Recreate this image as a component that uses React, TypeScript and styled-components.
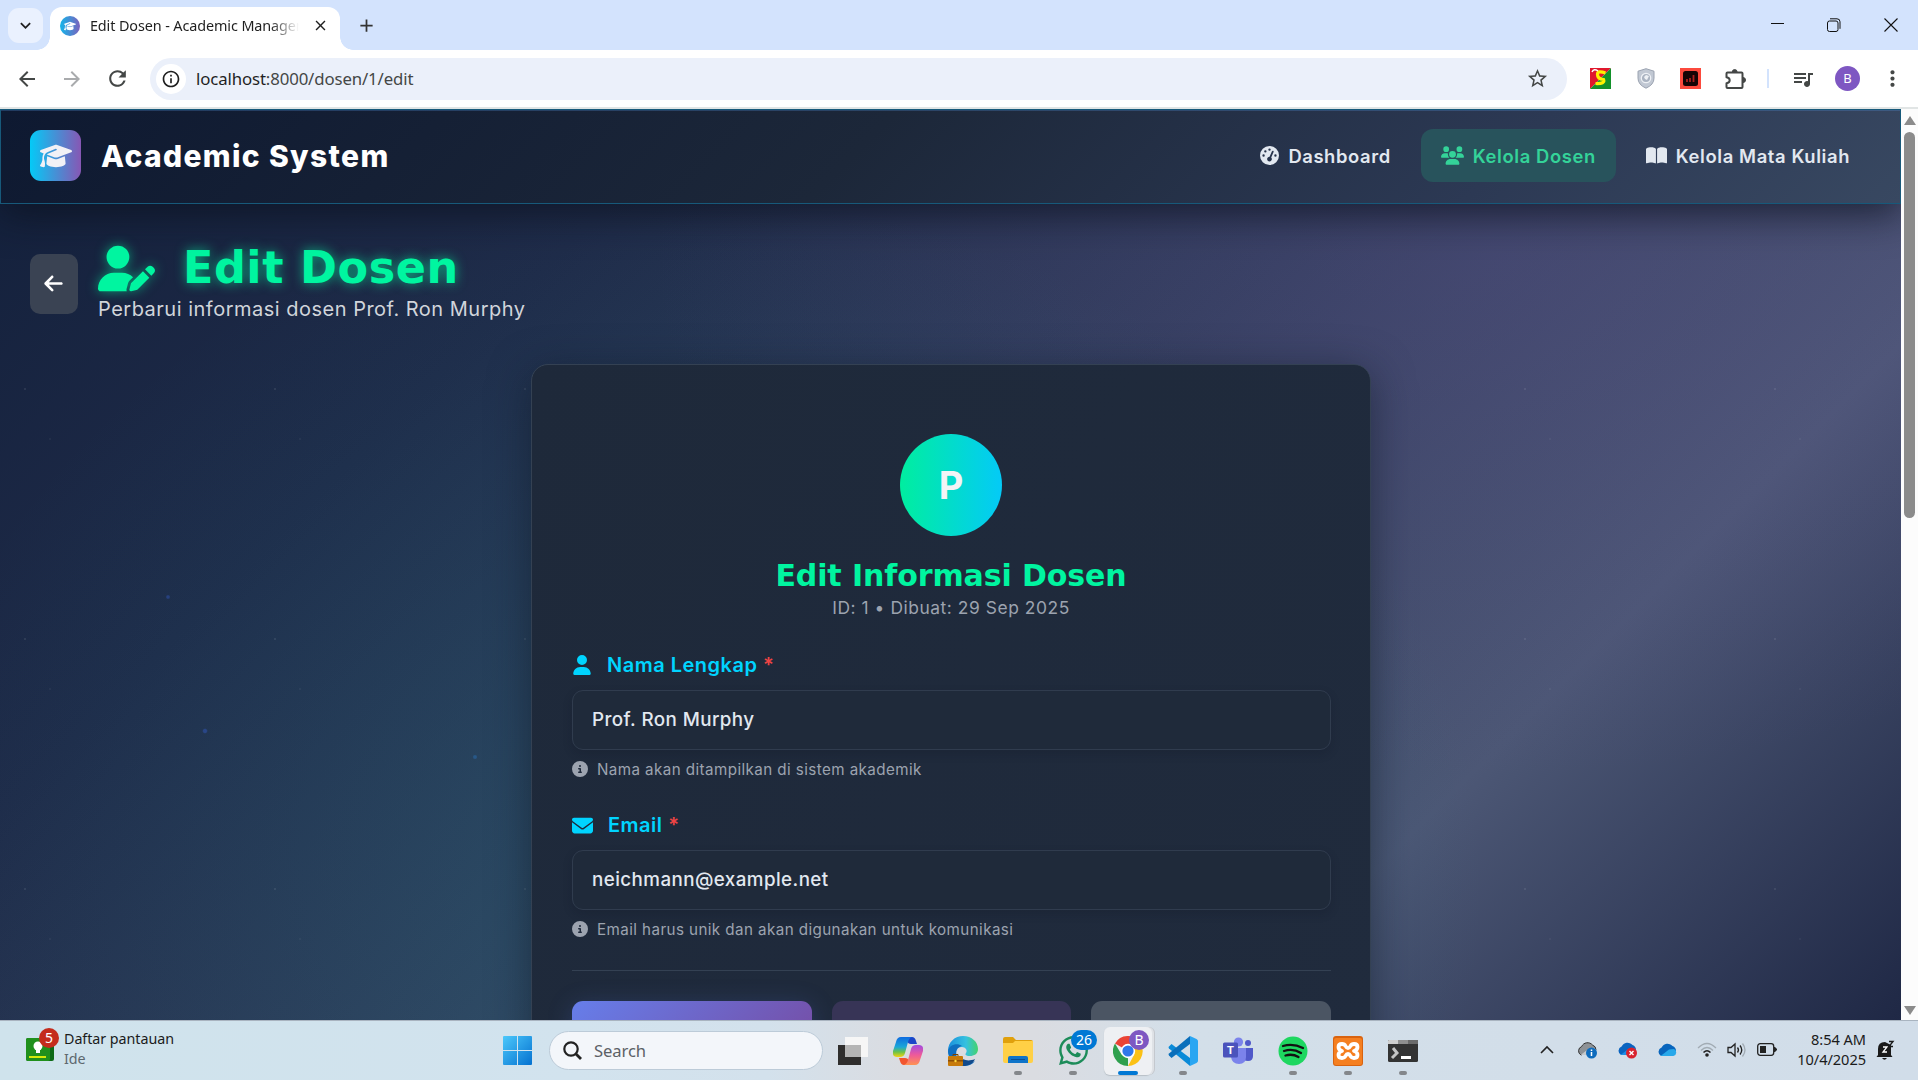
import React from "react";
import styled, { createGlobalStyle } from "styled-components";
import {
  FaGraduationCap, FaGaugeHigh, FaUsers, FaBookOpen, FaArrowLeft, FaUserPen,
  FaUser, FaEnvelope, FaCircleInfo, FaWhatsapp,
} from "react-icons/fa6";
import {
  MdArrowBack, MdArrowForward, MdRefresh, MdStarBorder,
  MdQueueMusic, MdMoreVert, MdClose, MdAdd, MdKeyboardArrowDown, MdInfoOutline,
} from "react-icons/md";

const ui = `"Noto Sans", "Open Sans", sans-serif`;
const display = `"DejaVu Sans", Inter, sans-serif`;

const Global = createGlobalStyle`
  * { box-sizing: border-box; }
  html, body { margin: 0; padding: 0; overflow: hidden; }
  svg { display: block; flex: none; }
`;

const Desktop = styled.div`
  width: 1918px;
  height: 1080px;
  display: flex;
  flex-direction: column;
  overflow: hidden;
  font-family: Inter, sans-serif;
`;

/* ---------- Browser window ---------- */

const TabStrip = styled.div`
  height: 50px;
  flex: none;
  background: #d3e3fd;
  display: flex;
  align-items: flex-start;
  padding: 7px 0 0 8px;
`;
const TabSearch = styled.div`
  width: 35px;
  height: 35px;
  margin-top: 1px;
  border-radius: 11px;
  background: #eaf1fe;
  display: grid;
  place-items: center;
  color: #1f1f1f;
`;
const Tab = styled.div`
  position: relative;
  width: 290px;
  height: 43px;
  margin-left: 7px;
  padding: 0 11px 6px 10px;
  border-radius: 12px 12px 0 0;
  background: #fff;
  display: flex;
  align-items: center;
  &::before, &::after {
    content: "";
    position: absolute;
    bottom: 0;
    width: 13px;
    height: 13px;
  }
  &::before { left: -13px; background: radial-gradient(circle at 0 0, transparent 12.5px, #fff 13px); }
  &::after { right: -13px; background: radial-gradient(circle at 100% 0, transparent 12.5px, #fff 13px); }
`;
const Favicon = styled.div`
  width: 20px;
  height: 20px;
  border-radius: 50%;
  background: linear-gradient(90deg, #13b5ea, #7b62bd);
  color: #fff;
  display: grid;
  place-items: center;
`;
const TabTitle = styled.div`
  width: 210px;
  margin: 0 13px 0 10px;
  overflow: hidden;
  white-space: nowrap;
  font: 14.4px/20px ${ui};
  letter-spacing: -0.1px;
  color: #1f1f1f;
  mask-image: linear-gradient(90deg, #000 86%, transparent 100%);
`;
const NewTab = styled.div`
  margin: 8px 0 0 16px;
  color: #333;
`;
const WindowButtons = styled.div`
  margin-left: auto;
  width: 172px;
  height: 35px;
  display: flex;
  align-items: center;
  justify-content: space-between;
  padding: 0 20px 0 25px;
`;
const Toolbar = styled.div`
  height: 59px;
  flex: none;
  display: flex;
  align-items: center;
  padding: 0 14px 0 15px;
  background: #fff;
  border-bottom: 2px solid #e1e5e5;
`;
const ToolIcon = styled.div<{ $w?: number; $dim?: boolean }>`
  width: ${(p) => p.$w ?? 45}px;
  flex: none;
  display: grid;
  place-items: center;
  color: ${(p) => (p.$dim ? "#a9abad" : "#444746")};
`;
const Menu = styled(ToolIcon)`
  margin-left: 10px;
`;
const NavIcons = styled.div`
  width: 135px;
  display: flex;
  & > * { justify-items: start; }
`;
const Address = styled.div`
  flex: 1;
  height: 42px;
  border-radius: 21px;
  background: #ebf0fa;
  display: flex;
  align-items: center;
  padding: 0 18px 0 6px;
`;
const SiteInfo = styled.div`
  width: 30px;
  height: 30px;
  border-radius: 50%;
  background: #fff;
  display: grid;
  place-items: center;
  color: #1f1f1f;
`;
const Url = styled.div`
  flex: 1;
  margin-left: 10px;
  font: 16.8px/24px ${ui};
  letter-spacing: -0.12px;
  color: #444746;
  b { font-weight: 400; color: #1f1f1f; }
`;
const Extensions = styled.div`
  display: flex;
  align-items: center;
  margin-left: 11px;
`;
const Divider = styled.div`
  width: 2px;
  height: 19px;
  margin: 0 11px 0 9px;
  background: #d3e3fd;
`;
const Profile = styled.div`
  width: 25px;
  height: 25px;
  border-radius: 50%;
  background: #7e57c2;
  color: #fff;
  font: 13px/25px ${ui};
  text-align: center;
`;
const Viewport = styled.div`
  flex: 1;
  min-height: 0;
  display: flex;
`;
const Scrollbar = styled.div`
  width: 17px;
  background: #fcfcfc;
  display: flex;
  flex-direction: column;
  align-items: center;
  padding: 7px 0 5px;
`;
const Thumb = styled.div`
  width: 11px;
  height: 386px;
  margin: 7px 0 auto;
  border-radius: 6px;
  background: #8b8b8b;
`;
const Arrow = styled.div<{ $down?: boolean }>`
  border: 6px solid transparent;
  border-top-width: ${(p) => (p.$down ? 9 : 0)}px;
  border-bottom-width: ${(p) => (p.$down ? 0 : 9)}px;
  border-${(p) => (p.$down ? "top" : "bottom")}-color: #8b8b8b;
`;

/* ---------- Site ---------- */

const Page = styled.div`
  width: 1901px;
  height: 911px;
  overflow: hidden;
  display: flex;
  flex-direction: column;
  background:
    radial-gradient(circle at 25px 30px, rgba(255, 255, 255, 0.08) 0.8px, transparent 1.6px) 0 0 / 250px 250px,
    radial-gradient(circle at 50px 80px, rgba(255, 255, 255, 0.04) 0.8px, transparent 1.6px) 0 0 / 250px 250px,
    radial-gradient(circle at 168px 488px, rgba(50, 90, 200, 0.4) 1.2px, transparent 2.4px),
    radial-gradient(circle at 205px 622px, rgba(50, 90, 200, 0.45) 1.5px, transparent 2.8px),
    radial-gradient(circle at 475px 648px, rgba(40, 120, 200, 0.4) 1.3px, transparent 2.5px),
    radial-gradient(ellipse 850px 520px at 1500px 150px, rgba(105, 75, 160, 0.2), transparent),
    radial-gradient(ellipse 800px 700px at 690px 780px, rgba(20, 140, 150, 0.2), transparent),
    linear-gradient(135deg, #13203b 0%, #1f2b49 25%, #323f5c 50%, #4c5775 76%, #1f2845 100%);
`;
const Header = styled.header`
  position: relative;
  height: 95px;
  flex: none;
  display: flex;
  align-items: center;
  padding: 0 30px 2px 29px;
  border: 1px solid #17597a;
  background: linear-gradient(135deg, #0e1931 0%, #1c2739 45%, #2c3954 78%, #384861 100%);
  box-shadow: inset 0 1px 0 rgba(80, 140, 210, 0.3), 0 10px 38px rgba(10, 16, 28, 0.7);
`;
const Logo = styled.div`
  width: 51px;
  height: 51px;
  border-radius: 11px;
  background: linear-gradient(90deg, #04caf7, #8757b4);
  color: #f1f1f6;
  display: grid;
  place-items: center;
`;
const Brand = styled.div`
  margin-left: 20px;
  font: 800 30px/40px Inter, sans-serif;
  letter-spacing: 1.35px;
  color: #fff;
  white-space: nowrap;
`;
const Nav = styled.nav`
  margin-left: auto;
  display: flex;
  gap: 10px;
`;
const NavLink = styled.div<{ $active?: boolean }>`
  height: 53px;
  padding: 0 20px;
  border-radius: 12px;
  display: flex;
  align-items: center;
  gap: 9px;
  font: 600 18.4px/24px Inter, sans-serif;
  letter-spacing: 0.6px;
  color: ${(p) => (p.$active ? "#34d399" : "#e2e8f0")};
  background: ${(p) => (p.$active ? "#28535c" : "transparent")};
  white-space: nowrap;
`;
const PageHead = styled.div`
  display: flex;
  align-items: center;
  height: 80px;
  margin: 36px 0 0 30px;
  gap: 20px;
`;
const Back = styled.div`
  width: 48px;
  height: 60px;
  margin-top: 8px;
  padding: 0 1px 1px 0;
  border-radius: 10px;
  background: #3a4353;
  color: #fff;
  display: grid;
  place-items: center;
`;
const Heading = styled.div`
  display: flex;
  flex-direction: column;
  margin-top: 4px;
`;
const Title = styled.h1`
  margin: 0;
  height: 54px;
  display: flex;
  align-items: center;
  gap: 28px;
  font: 700 44.5px/54px ${display};
  letter-spacing: 0.55px;
  color: #00f5a0;
  text-shadow: 0 0 12px rgba(0, 245, 160, 0.65);
  svg { filter: drop-shadow(0 0 6px rgba(0, 245, 160, 0.55)); }
`;
const Subtitle = styled.div`
  font-size: 20px;
  line-height: 28px;
  letter-spacing: 0.5px;
  color: #d1d5db;
`;
const Card = styled.section`
  width: 840px;
  height: 700px;
  flex: none;
  margin: 44px 0 0 531px;
  padding: 69px 39px 0 40px;
  border: 1px solid #344153;
  border-radius: 17px;
  background: linear-gradient(120deg, #1e293a, #202b3d);
  box-shadow: 0 8px 40px rgba(15, 23, 38, 0.55);
`;
const Profiled = styled.div`
  display: flex;
  flex-direction: column;
  align-items: center;
  margin: 0 1px 28px 0;
`;
const Avatar = styled.div`
  width: 102px;
  height: 102px;
  border-radius: 50%;
  background: linear-gradient(90deg, #00ee9f, #04caf7);
  color: #f3f4f6;
  font: 700 38px/102px Inter, sans-serif;
  text-align: center;
`;
const CardTitle = styled.h2`
  margin: 20px 0 -1px;
  font: 700 30px/40px ${display};
  letter-spacing: -0.1px;
  color: #00f5a0;
  white-space: nowrap;
`;
const CardMeta = styled.div`
  font-size: 17.4px;
  line-height: 26px;
  letter-spacing: 0.55px;
  color: #9ca3af;
`;
const Field = styled.div`
  height: 160px;
`;
const Label = styled.div`
  height: 32px;
  display: flex;
  align-items: center;
  gap: 15px;
  color: #00d4ff;
  font: 600 20px/32px Inter, sans-serif;
  letter-spacing: 0.5px;
  em { font-style: normal; color: #ef4444; }
`;
const Input = styled.div`
  height: 60px;
  margin-top: 9px;
  padding: 0 19px;
  border: 1px solid #303c4e;
  border-radius: 11px;
  background: #1f2a3a;
  box-shadow: 0 4px 10px rgba(15, 20, 35, 0.2);
  font: 500 18.8px/57px Inter, sans-serif;
  letter-spacing: 0.42px;
  color: #e2e8f0;
`;
const Hint = styled.div`
  height: 20px;
  margin-top: 9px;
  display: flex;
  align-items: center;
  gap: 9px;
  font-size: 15.2px;
  letter-spacing: 0.41px;
  color: #9ca3af;
`;
const Actions = styled.div`
  margin-top: 1px;
  padding-top: 30px;
  border-top: 1px solid #344153;
  display: grid;
  grid-template-columns: repeat(3, 1fr);
  gap: 20px;
`;
const Action = styled.div<{ $bg: string; $glow?: boolean }>`
  height: 60px;
  border-radius: 11px;
  background: ${(p) => p.$bg};
  box-shadow: ${(p) => (p.$glow ? "0 4px 25px rgba(85, 110, 210, 0.25)" : "none")};
`;

/* ---------- Taskbar ---------- */

const Taskbar = styled.div`
  height: 60px;
  flex: none;
  display: flex;
  align-items: center;
  border-top: 1px solid #a9b4c0;
  background: linear-gradient(90deg, #cfe3ec 0%, #d2e3ee 30%, #d3e1ec 40%, #dadce1 47%, #dadce1 54%, #d3dfe9 62%, #d1dde9 100%);
  font-family: ${ui};
  color: #1b1b1b;
`;
const Widget = styled.div`
  width: 503px;
  padding-left: 26px;
  display: flex;
  align-items: center;
  gap: 10px;
  font-size: 14.3px;
  line-height: 20px;
  letter-spacing: -0.05px;
  span { display: block; color: #5d686e; }
`;
const WidgetText = styled.div`
  margin-top: -4px;
`;
const WidgetIcon = styled.div`
  position: relative;
  width: 28px;
  height: 24px;
  margin-top: -2px;
`;
const Badge = styled.div<{ $bg: string; $x: number; $y: number; $w?: number }>`
  position: absolute;
  left: ${(p) => p.$x}px;
  top: ${(p) => p.$y}px;
  width: ${(p) => p.$w ?? 20}px;
  height: 20px;
  border-radius: 10px;
  background: ${(p) => p.$bg};
  color: #fff;
  font: 14px/20px ${ui};
  text-align: center;
`;
const SearchBox = styled.div`
  width: 274px;
  height: 39px;
  margin: 0 10px 0 17px;
  border-radius: 20px;
  background: #f3f6fa;
  border: 1px solid #bccbd8;
  display: flex;
  align-items: center;
  gap: 12px;
  padding-left: 13px;
  font-size: 16.6px;
  letter-spacing: -0.1px;
  color: #5c6166;
`;
const Apps = styled.div`
  display: flex;
  gap: 7px;
  margin-left: -4px;
`;
const AppButton = styled.div<{ $active?: boolean }>`
  position: relative;
  width: 48px;
  height: 48px;
  border-radius: 6px;
  display: grid;
  place-items: center;
  background: ${(p) => (p.$active ? "#eef0f3" : "transparent")};
  box-shadow: ${(p) => (p.$active ? "2px 0 0 #dfe2e6, 3px 0 0 #c4c8ce, 0 1px 1px #b8bfc6" : "none")};
`;
const Running = styled.div<{ $active?: boolean }>`
  position: absolute;
  bottom: 0;
  left: 50%;
  transform: translateX(-50%);
  width: ${(p) => (p.$active ? 20 : 8)}px;
  height: 4px;
  border-radius: 2px;
  background: ${(p) => (p.$active ? "#0078d4" : "#84878b")};
`;
const Tray = styled.div`
  margin: -2px 0 0 auto;
  display: flex;
  align-items: center;
  padding-right: 22px;
`;
const TrayItem = styled.div<{ $w: number }>`
  width: ${(p) => p.$w}px;
  display: grid;
  place-items: center;
`;
const Clock = styled.div`
  width: 79px;
  margin: -2px 10px 0 0;
  text-align: right;
  font-size: 14.6px;
  line-height: 20px;
  letter-spacing: -0.05px;
  white-space: nowrap;
`;

const Cloud = ({ tone }: { tone: "blue" | "sky" | "gray" }) => {
  const [a, b] = { blue: ["#0a64c0", "#1e8fe8"], sky: ["#0865bd", "#28a8ea"], gray: ["#8e9296", "#c7c9cb"] }[tone];
  return (
    <>
      <path d="M5 14a4.6 4.6 0 0 1 .6-8.4A6.5 6.5 0 0 1 16.5 4 5.3 5.3 0 0 1 20 9z" fill={a} stroke={tone === "gray" ? "#333" : "none"} />
      <path d="M4.6 14 13 7.4l5-.4a3.7 3.7 0 0 1-.6 7z" fill={b} />
    </>
  );
};

const EdgeIcon = () => (
  <svg width="30" height="30" viewBox="0 0 30 30">
    <defs>
      <linearGradient id="eg" x2="1"><stop stopColor="#1a8fdc" /><stop offset=".6" stopColor="#35c1e0" /><stop offset="1" stopColor="#45d36c" /></linearGradient>
    </defs>
    <path d="M0 15C0 6 7 0 15 0c9 0 15 6 15 13 0 5-4 7-8 7-5 0-5-2-4-3 2-3-1-6-4-6-6 0-9 5-8 10C3 21 0 19 0 15z" fill="url(#eg)" />
    <path d="M0 15c1-6 9-9 14-5-5 1-7 6-5 11 2 6 9 8 16 5l2-1c-3 4-7 5-12 5C7 30 0 24 0 15z" fill="#0f6fc0" />
    <path d="M12 20c2 4 8 6 15 3-2 5-7 7-12 7-3-2-4-6-3-10z" fill="#114a8b" />
    <rect y="20" width="15" height="10" rx="1" fill="#c77a0a" />
    <path d="M5 20v-1.5h5V20" fill="none" stroke="#7a4300" />
    <path d="M0 24h15v1.5H0z" fill="#8e4f03" /><circle cx="7.5" cy="25" r="1.2" fill="#ffd83a" />
  </svg>
);
const CopilotIcon = () => (
  <svg width="30" height="28" viewBox="0 0 30 28">
    <defs>
      <linearGradient id="c1" x2="0" y2="1"><stop stopColor="#0e6be0" /><stop offset=".5" stopColor="#1ba7d8" /><stop offset=".75" stopColor="#6cc24a" /><stop offset="1" stopColor="#f5d311" /></linearGradient>
      <linearGradient id="c2" x2="0" y2="1"><stop stopColor="#a24be0" /><stop offset=".5" stopColor="#ee5a9a" /><stop offset="1" stopColor="#ff9351" /></linearGradient>
    </defs>
    <path d="M14 0h5q3 0 4 4l1 3h-6q-3 0-4-3z" fill="#1b46c8" />
    <path d="M16 28h-5q-3 0-4-4l-1-3h6q3 0 4 3z" fill="#f2552f" />
    <path d="M8 0h11q-3 1-4 5l-3 11q-1 4-5 4H4q-5 0-4-6L3 5q1-5 5-5z" fill="url(#c1)" />
    <path d="M22 28H11q3-1 4-5l3-11q1-4 5-4h3q5 0 4 6l-3 9q-1 5-5 5z" fill="url(#c2)" />
  </svg>
);
const ChromeIcon = () => (
  <svg width="30" height="30" viewBox="0 0 30 30">
    <path d="M15 15 2 7.5A15 15 0 0 1 28 7.5z" fill="#ea4335" />
    <path d="M15 15 15 30A15 15 0 0 1 2 7.5l6.5 11z" fill="#2fa04e" />
    <path d="M15 8h13A15 15 0 0 1 15 30l6-11z" fill="#fbc116" />
    <circle cx="15" cy="15" r="7.2" fill="#fff" /><circle cx="15" cy="15" r="5.6" fill="#2f78ea" />
  </svg>
);

const apps: { name: string; icon: React.ReactNode; running?: boolean; active?: boolean }[] = [
  { name: "tasks", icon: (
    <svg width="30" height="28" viewBox="0 0 30 28"><path d="M0 8h23v20H0z" fill="#2f2e2d" /><path d="M7 0h23v20H7z" fill="#f6f6f6" /><path d="M7 8h16v12H7z" fill="#b5b5b5" /></svg>
  ) },
  { name: "copilot", icon: <CopilotIcon /> },
  { name: "edge", icon: <EdgeIcon /> },
  { name: "files", running: true, icon: (
    <svg width="30" height="27" viewBox="0 0 30 27"><path d="M0 2q0-2 2-2h8l3 3h15q2 0 2 2v4H0z" fill="#e0a00c" /><path d="M0 6h10l2-2h18v20q0 2-2 2H2q-2 0-2-2z" fill="#ffd046" /><path d="M5 26v-5q0-2 2-2h16q2 0 2 2v5z" fill="#0f74c9" /><path d="M8 22.500h14" stroke="#0a4f92" /></svg>
  ) },
  { name: "whatsapp", running: true, icon: <><FaWhatsapp size={33} color="#1c8c59" /><Badge $bg="#0078d4" $x={22} $y={3} $w={26}>26</Badge></> },
  { name: "chrome", running: true, active: true, icon: <><ChromeIcon /><Badge $bg="#7e57c2" $x={25} $y={3}>B</Badge></> },
  { name: "code", running: true, icon: (
    <svg width="30" height="30" viewBox="0 0 30 30"><path d="M22 0 3 18.500q-1 1-2 0L.4 17.900q-1-1 0-2L22 30V22L3 8.500q-1-.8-2 .2l-.6.700q-.8 1 .1 1.900L22 30z" fill="none" /><path d="M1 10.500 3.500 8 22 22v8L1 12.500q-1-1 0-2z" fill="#0a8ad8" /><path d="M1 19.500 3.500 22 22 8V0L1 17.500q-1 1 0 2z" fill="#0a6fbb" /><path d="M22 0l6.500 3q1.500.8 1.500 2v20q0 1.200-1.500 2L22 30z" fill="#2aa6f2" /></svg>
  ) },
  { name: "teams", icon: (
    <svg width="30" height="28" viewBox="0 0 30 28"><circle cx="15.500" cy="5" r="4.600" fill="#7b83eb" /><circle cx="25" cy="6" r="3" fill="#5059c9" /><path d="M20 11h10v8q0 5-5 5t-6-4z" fill="#5059c9" /><path d="M9 11h14v9q0 7-7 7t-8-7z" fill="#7b83eb" /><rect y="5.500" width="15" height="15" rx="1.500" fill="#4b53bc" /><text x="7.500" y="17" textAnchor="middle" fontFamily="Inter, sans-serif" fontWeight="700" fontSize="11" fill="#fff">T</text></svg>
  ) },
  { name: "spotify", running: true, icon: (
    <svg width="30" height="30" viewBox="0 0 30 30"><circle cx="15" cy="15" r="14.500" fill="#1ed760" /><path d="M5 10q10-3 20 2M6 15q9-3 17 2M7.500 19.500q7-2 13 1.500" fill="none" stroke="#121212" strokeWidth="2.300" strokeLinecap="round" /></svg>
  ) },
  { name: "xampp", running: true, icon: (
    <svg width="30" height="30" viewBox="0 0 30 30"><rect width="30" height="30" rx="3" fill="#d9630f" /><rect x="1" y="2" width="28" height="27" rx="2" fill="#f57f20" /><path d="M9 15q-3.500-1-3.500-4T9 8q2.500 0 3.500 2t2.500 2 2.500-2T21 8q3.500 0 3.500 3T21 15q3.500 1 3.500 4T21 22q-2.500 0-3.500-2T15 18t-2.500 2T9 22q-3.500 0-3.500-3T9 15z" fill="none" stroke="#fff" strokeWidth="3.800" strokeLinejoin="round" /></svg>
  ) },
  { name: "terminal", running: true, icon: (
    <svg width="30" height="22" viewBox="0 0 30 22"><rect width="30" height="22" rx="1.500" fill="#333" /><path d="M1 0h9v4H0V1z" fill="#cfcfcf" /><path d="M10 0h10v4H10z" fill="#8f8f8f" /><path d="M20 0h10v4H20z" fill="#6a6a6a" /><path d="m5 8 4 5-5 5" fill="none" stroke="#c4c4c4" strokeWidth="3" /><path d="M13 17.500h10" stroke="#fff" strokeWidth="3" /></svg>
  ) },
];

const fields = [
  { label: "Nama Lengkap", value: "Prof. Ron Murphy", hint: "Nama akan ditampilkan di sistem akademik", icon: <FaUser width={18} height={21} /> },
  { label: "Email", value: "neichmann@example.net", hint: "Email harus unik dan akan digunakan untuk komunikasi", icon: <FaEnvelope size={21} /> },
];

export default function App() {
  return (
    <Desktop>
      <Global />
      <TabStrip>
        <TabSearch><MdKeyboardArrowDown size={21} /></TabSearch>
        <Tab>
          <Favicon><FaGraduationCap size={12} /></Favicon>
          <TabTitle>Edit Dosen - Academic Management</TabTitle>
          <MdClose size={17} color="#1f1f1f" />
        </Tab>
        <NewTab><MdAdd size={21} /></NewTab>
        <WindowButtons>
          <svg width="13" height="13" viewBox="0 0 13 13"><path d="M0 5.500h13" stroke="#111" /></svg>
          <svg width="14" height="14" viewBox="0 0 14 14" fill="none" stroke="#111"><rect x=".5" y="3" width="10.500" height="10.500" rx="2" /><path d="M3 .8h7q3 0 3 3v7" /></svg>
          <svg width="14" height="14" viewBox="0 0 14 14"><path d="m.5.5 13 13m0-13-13 13" stroke="#111" strokeWidth="1.100" /></svg>
        </WindowButtons>
      </TabStrip>
      <Toolbar>
        <NavIcons>
          <ToolIcon><MdArrowBack size={24} /></ToolIcon>
          <ToolIcon $dim><MdArrowForward size={24} /></ToolIcon>
          <ToolIcon><MdRefresh size={25} /></ToolIcon>
        </NavIcons>
        <Address>
          <SiteInfo><MdInfoOutline size={20} /></SiteInfo>
          <Url><b>localhost</b>:8000/dosen/1/edit</Url>
          <MdStarBorder size={23} color="#444746" />
        </Address>
        <Extensions>
          <ToolIcon>
            <svg width="21" height="21" viewBox="0 0 21 21"><path d="M0 0h21L0 21z" fill="#e0182d" /><path d="M21 0v21H0z" fill="#12912a" /><path d="M15.500 5q-8-3-8 1.500t6 5q2 4.500-8 4" fill="none" stroke="#fff200" strokeWidth="3.200" /><path d="M2 4q2-4 6-1" fill="none" stroke="#fff" strokeWidth="1.500" /></svg>
          </ToolIcon>
          <ToolIcon>
            <svg width="18" height="21" viewBox="0 0 18 21"><path d="m9 .7 8 2.500v7q0 6.500-8 10-8-3.500-8-10v-7z" fill="#c1c8d3" stroke="#9aa2b0" /><circle cx="9" cy="10" r="4.700" fill="#aab3c1" stroke="#eef1f5" strokeWidth="1.300" /><path d="m7 9 2-2 3 1-2 4-2-1z" fill="#eef1f5" /></svg>
          </ToolIcon>
          <ToolIcon>
            <svg width="21" height="21" viewBox="0 0 21 21"><rect width="21" height="21" fill="#fc4a3d" /><rect x="3" y="3" width="15" height="15" rx="2.500" fill="#140405" /><path d="M7 14v-3m3 3v-4m3.500 4V7" stroke="#a91e1e" strokeWidth="1.800" /></svg>
          </ToolIcon>
          <ToolIcon>
            <svg width="22" height="22" viewBox="0 0 22 22">
              <path d="M2.500 4.500h14q1 0 1 1v13.500q0 1-1 1h-14q-1 0-1-1v-3.800q3.200-.4 3.200-3t-3.200-3V5.500q0-1 1-1z" fill="none" stroke="#444746" strokeWidth="2" strokeLinejoin="round" />
              <path d="M7.300 4a2.400 2.400 0 0 1 4.800 0zM18 9.500a2.500 2.500 0 0 1 0 5z" fill="#444746" stroke="#444746" />
            </svg>
          </ToolIcon>
          <Divider />
          <ToolIcon $w={45}><MdQueueMusic size={24} /></ToolIcon>
          <ToolIcon $w={45}><Profile>B</Profile></ToolIcon>
          <Menu $w={24}><MdMoreVert size={25} /></Menu>
        </Extensions>
      </Toolbar>
      <Viewport>
        <Page>
          <Header>
            <Logo><FaGraduationCap size={32} /></Logo>
            <Brand>Academic System</Brand>
            <Nav>
              <NavLink><FaGaugeHigh size={19} />Dashboard</NavLink>
              <NavLink $active><FaUsers size={23} />Kelola Dosen</NavLink>
              <NavLink><FaBookOpen size={21} />Kelola Mata Kuliah</NavLink>
            </Nav>
          </Header>
          <PageHead>
            <Back><FaArrowLeft size={21} /></Back>
            <Heading>
              <Title><FaUserPen size={57} />Edit Dosen</Title>
              <Subtitle>Perbarui informasi dosen Prof. Ron Murphy</Subtitle>
            </Heading>
          </PageHead>
          <Card>
            <Profiled>
              <Avatar>P</Avatar>
              <CardTitle>Edit Informasi Dosen</CardTitle>
              <CardMeta>ID: 1 • Dibuat: 29 Sep 2025</CardMeta>
            </Profiled>
            {fields.map((f) => (
              <Field key={f.label}>
                <Label>{f.icon}<span>{f.label} <em>*</em></span></Label>
                <Input>{f.value}</Input>
                <Hint><FaCircleInfo size={16} />{f.hint}</Hint>
              </Field>
            ))}
            <Actions>
              <Action $bg="linear-gradient(135deg, #667eea, #764ba2)" $glow />
              <Action $bg="#373456" />
              <Action $bg="#4b5563" />
            </Actions>
          </Card>
        </Page>
        <Scrollbar><Arrow /><Thumb /><Arrow $down /></Scrollbar>
      </Viewport>
      <Taskbar>
        <Widget>
          <WidgetIcon>
            <svg width="28" height="24" viewBox="0 0 28 24"><rect width="28" height="23" rx="2" fill="#0d6a16" /><rect width="24" height="23" rx="2" fill="#20901c" /><circle cx="12" cy="8" r="4.500" fill="#fff" /><path d="M10 11h4v4h-4z" fill="#fff" /><path d="M3 19h17" stroke="#d4ea0a" strokeWidth="2" /></svg>
            <Badge $bg="#c42b1c" $x={13} $y={-10}>5</Badge>
          </WidgetIcon>
          <WidgetText>Daftar pantauan<span>Ide</span></WidgetText>
        </Widget>
        <svg width="29" height="29" viewBox="0 0 29 29">
          <defs><linearGradient id="win" x2="1" y2="1"><stop stopColor="#4cc8fb" /><stop offset="1" stopColor="#0471d0" /></linearGradient></defs>
          <path d="M0 1q0-1 1-1h13v14H0zM15 0h13q1 0 1 1v13H15zM0 15h14v14H1q-1 0-1-1zM15 15h14v13q0 1-1 1H15z" fill="url(#win)" />
        </svg>
        <SearchBox>
          <svg width="19" height="19" viewBox="0 0 19 19" fill="none" stroke="#222" strokeWidth="2.200"><circle cx="8" cy="8" r="6.700" /><path d="m12.500 12.500 5.500 5.500" strokeWidth="2.800" /></svg>
          Search
        </SearchBox>
        <Apps>
          {apps.map((a) => (
            <AppButton key={a.name} $active={a.active}>
              {a.icon}
              {a.running && <Running $active={a.active} />}
            </AppButton>
          ))}
        </Apps>
        <Tray>
          <TrayItem $w={40}><svg width="14" height="9" viewBox="0 0 14 9"><path d="m1 8 6-6 6 6" fill="none" stroke="#222" strokeWidth="1.600" /></svg></TrayItem>
          <TrayItem $w={40}><svg width="22" height="18" viewBox="0 0 22 18"><Cloud tone="gray" /><circle cx="15.500" cy="12" r="5.500" fill="#0f6cbd" /><path d="M15.500 11v4m0-6.500v1.500" stroke="#fff" strokeWidth="1.500" /></svg></TrayItem>
          <TrayItem $w={40}><svg width="22" height="18" viewBox="0 0 22 18"><Cloud tone="blue" /><circle cx="15.500" cy="12" r="5.500" fill="#d9232e" /><path d="m13.500 10 4 4m0-4-4 4" stroke="#fff" strokeWidth="1.400" /></svg></TrayItem>
          <TrayItem $w={40}><svg width="22" height="16" viewBox="0 0 22 16"><Cloud tone="sky" /></svg></TrayItem>
          <TrayItem $w={40}><svg width="20" height="15" viewBox="0 0 20 15" fill="none"><path d="M1 6q9-9 18 0" stroke="#a2acb4" strokeWidth="1.300" /><path d="M4 8.500q6-6 12 0" stroke="#a2acb4" strokeWidth="1.300" /><path d="M6.500 10.500q3.500-3.500 7 0" stroke="#222" strokeWidth="1.500" /><circle cx="10" cy="13" r="1.800" fill="#222" /></svg></TrayItem>
          <TrayItem $w={20}><svg width="20" height="16" viewBox="0 0 20 16" fill="none" stroke="#222" strokeWidth="1.300"><path d="M1 5.500h3L8 2v12l-4-3.500H1z" /><path d="M10.500 5.500q2 2.500 0 5M13 3.500q3.500 4.500 0 9" /><path d="M15.500 1.500q5 6.500 0 13" stroke="#a2acb4" /></svg></TrayItem>
          <TrayItem $w={40}><svg width="20" height="13" viewBox="0 0 20 13"><rect x=".7" y=".7" width="16" height="11.600" rx="2.500" fill="none" stroke="#222" strokeWidth="1.300" /><rect x="3" y="3" width="6" height="7" fill="#222" /><path d="M17 4h1l2 2v1l-2 2h-1z" fill="#222" /></svg></TrayItem>
          <Clock>8:54 AM<br />10/4/2025</Clock>
          <svg width="20" height="20" viewBox="0 0 20 20"><path d="M2 15V9q0-7 7-7l6 3v10l1.500 2H.5zM6 18h5q-2.500 3.500-5 0z" fill="#1a1a1a" /><path d="M7 7h4l-4 5h4" fill="none" stroke="#fff" strokeWidth="1.300" /><path d="M13 1.500h4l-4 5h4" fill="none" stroke="#1a1a1a" strokeWidth="1.400" /></svg>
        </Tray>
      </Taskbar>
    </Desktop>
  );
}
